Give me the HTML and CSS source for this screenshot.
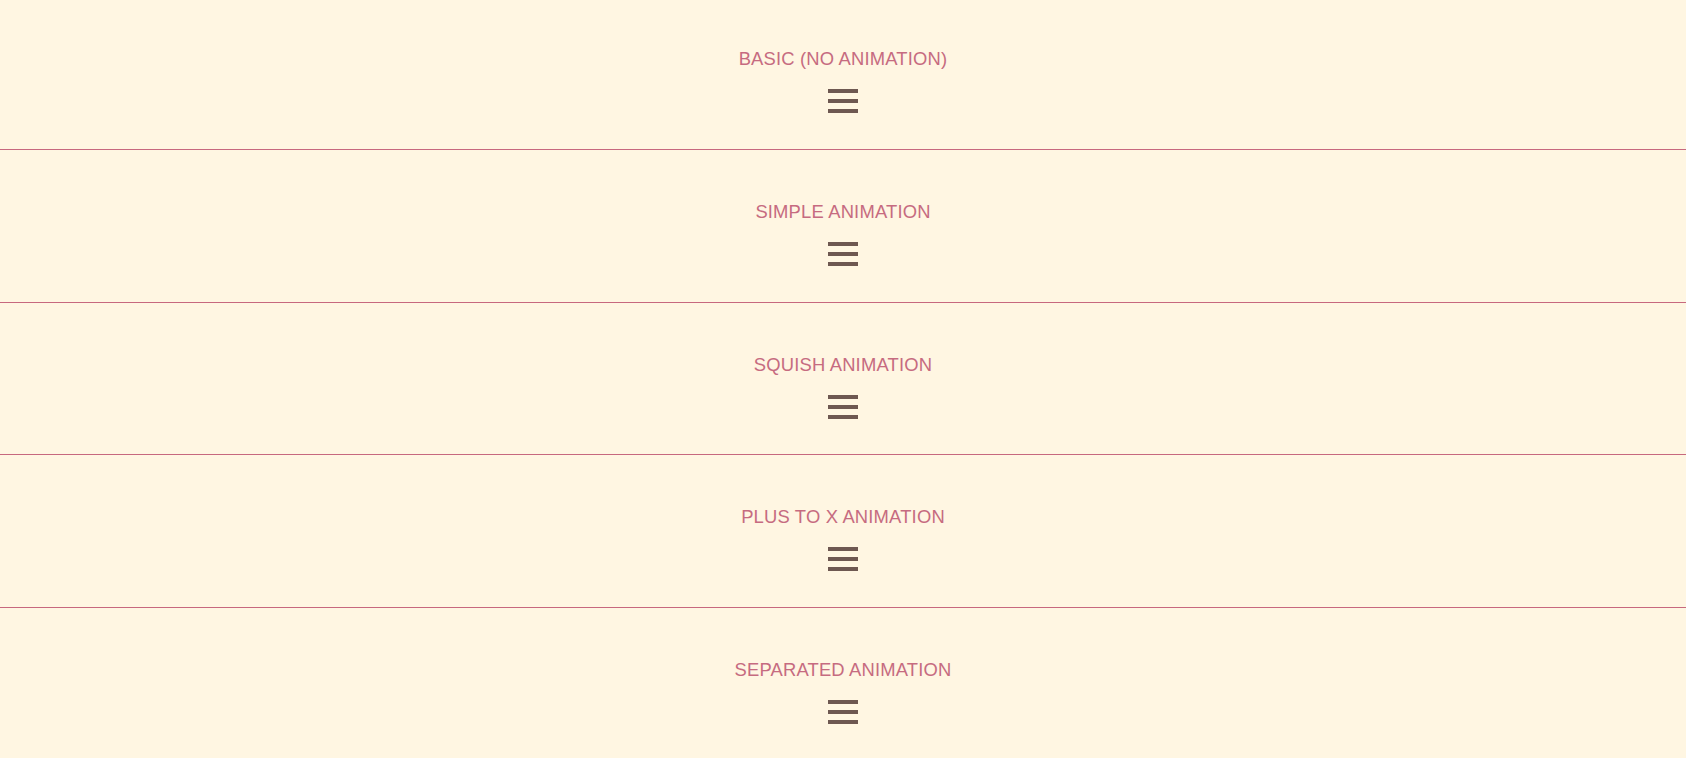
FILE: index.html
```html
<!DOCTYPE html>
<html lang="en">
<head>
<meta charset="utf-8">
<title>Hamburger menu animations</title>
<link rel="stylesheet" href="styles.css">
</head>
<body>
<main class="demos">
  <section class="demo">
    <h2 class="demo-title">BASIC (NO ANIMATION)</h2>
    <button class="burger" aria-label="Menu"><span class="bar"></span><span class="bar"></span><span class="bar"></span></button>
  </section>
  <section class="demo">
    <h2 class="demo-title">SIMPLE ANIMATION</h2>
    <button class="burger" aria-label="Menu"><span class="bar"></span><span class="bar"></span><span class="bar"></span></button>
  </section>
  <section class="demo">
    <h2 class="demo-title">SQUISH ANIMATION</h2>
    <button class="burger" aria-label="Menu"><span class="bar"></span><span class="bar"></span><span class="bar"></span></button>
  </section>
  <section class="demo">
    <h2 class="demo-title">PLUS TO X ANIMATION</h2>
    <button class="burger" aria-label="Menu"><span class="bar"></span><span class="bar"></span><span class="bar"></span></button>
  </section>
  <section class="demo">
    <h2 class="demo-title">SEPARATED ANIMATION</h2>
    <button class="burger" aria-label="Menu"><span class="bar"></span><span class="bar"></span><span class="bar"></span></button>
  </section>
</main>
</body>
</html>
```

FILE: styles.css
```css
html, body {
  margin: 0;
  padding: 0;
  background: #fff6e2;
  overflow: hidden;
}

body {
  font-family: "Liberation Sans", Arial, sans-serif;
}

.demos {
  margin-top: -2.67px;
}

.demo {
  display: flex;
  flex-direction: column;
  align-items: center;
  padding-top: 51px;
  box-sizing: border-box;
  height: calc(20vh + 1px);
  border-bottom: 1px solid #c7687e;
}

.demo-title {
  margin: 0 0 19px;
  font-size: 18.4px;
  font-weight: normal;
  line-height: 22px;
  color: #c66b80;
  letter-spacing: 0.18px;
}

.burger {
  display: flex;
  flex-direction: column;
  gap: 6px;
  width: 30px;
  padding: 0;
  margin: 0;
  border: 0;
  background: transparent;
  cursor: pointer;
}

.bar {
  display: block;
  width: 30px;
  height: 4px;
  background: #6e5851;
}
```
